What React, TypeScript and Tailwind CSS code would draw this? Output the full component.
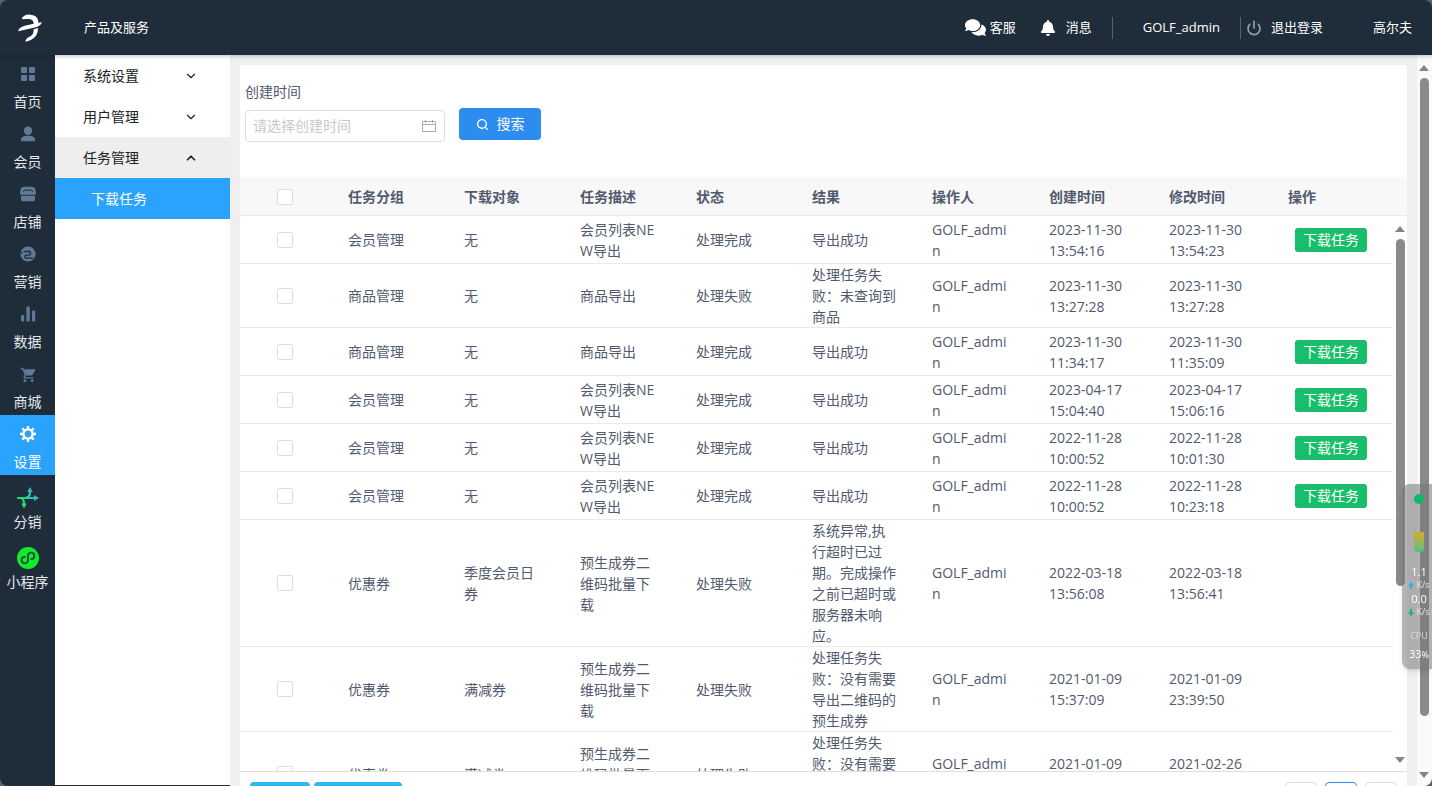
import type { ReactNode } from 'react';
import { FaBell, FaComments } from 'react-icons/fa';
import { IoMdCart } from 'react-icons/io';
import { ChevronDown, ChevronUp, Power, Search } from 'lucide-react';

type Task = {
  group: string;
  target: string;
  desc: string;
  status: string;
  result: string;
  created: [string, string];
  updated: [string, string];
  download?: boolean;
};

const tasks: Task[] = [
  { group: '会员管理', target: '无', desc: '会员列表NEW导出', status: '处理完成', result: '导出成功', created: ['2023-11-30', '13:54:16'], updated: ['2023-11-30', '13:54:23'], download: true },
  { group: '商品管理', target: '无', desc: '商品导出', status: '处理失败', result: '处理任务失败：未查询到商品', created: ['2023-11-30', '13:27:28'], updated: ['2023-11-30', '13:27:28'] },
  { group: '商品管理', target: '无', desc: '商品导出', status: '处理完成', result: '导出成功', created: ['2023-11-30', '11:34:17'], updated: ['2023-11-30', '11:35:09'], download: true },
  { group: '会员管理', target: '无', desc: '会员列表NEW导出', status: '处理完成', result: '导出成功', created: ['2023-04-17', '15:04:40'], updated: ['2023-04-17', '15:06:16'], download: true },
  { group: '会员管理', target: '无', desc: '会员列表NEW导出', status: '处理完成', result: '导出成功', created: ['2022-11-28', '10:00:52'], updated: ['2022-11-28', '10:01:30'], download: true },
  { group: '会员管理', target: '无', desc: '会员列表NEW导出', status: '处理完成', result: '导出成功', created: ['2022-11-28', '10:00:52'], updated: ['2022-11-28', '10:23:18'], download: true },
  { group: '优惠券', target: '季度会员日券', desc: '预生成券二维码批量下载', status: '处理失败', result: '系统异常,执行超时已过期。完成操作之前已超时或服务器未响应。', created: ['2022-03-18', '13:56:08'], updated: ['2022-03-18', '13:56:41'] },
  { group: '优惠券', target: '满减券', desc: '预生成券二维码批量下载', status: '处理失败', result: '处理任务失败：没有需要导出二维码的预生成券', created: ['2021-01-09', '15:37:09'], updated: ['2021-01-09', '23:39:50'] },
  { group: '优惠券', target: '满减券', desc: '预生成券二维码批量下载', status: '处理失败', result: '处理任务失败：没有需要导出二维码的预生成券', created: ['2021-01-09', '15:35:22'], updated: ['2021-02-26', '10:12:37'] },
];

const columns = ['任务分组', '下载对象', '任务描述', '状态', '结果', '操作人', '创建时间', '修改时间', '操作'];

const GridIcon = () => (
  <svg width="16" height="16" viewBox="0 0 16 16" fill="currentColor">
    <rect x="1" y="1" width="6" height="6" rx="1" />
    <rect x="9" y="1" width="6" height="6" rx="1" />
    <rect x="1" y="9" width="6" height="6" rx="1" />
    <rect x="9" y="9" width="6" height="6" rx="1" />
  </svg>
);

const PersonIcon = () => (
  <svg width="16" height="16" viewBox="0 0 16 16" fill="currentColor">
    <circle cx="8" cy="4.700" r="4.200" />
    <path d="M1 15.200v-1.400c0-2.600 2.600-4 7-4s7 1.400 7 4v1.400z" />
  </svg>
);

const ShopIcon = () => (
  <svg width="16" height="16" viewBox="0 0 16 16" fill="currentColor">
    <path d="M4 0.800h8c2 0 3 1 3.400 3l.6 2.400c.3 1.700-.6 2.600-2 2.600H2C.6 8.800-.3 7.900 0 6.200l.6-2.400c.4-2 1.400-3 3.400-3z" />
    <path d="M1 9.800h14V13.500a1.700 1.700 0 0 1-1.700 1.700H2.700A1.700 1.700 0 0 1 1 13.500z" />
    <path d="M3.300 5.800c.2-1.300.8-1.600 1.800-1.600h5.800c1 0 1.600.3 1.800 1.600" fill="none" stroke="#1f2d3a" strokeWidth="1" />
  </svg>
);

const MarketingIcon = () => (
  <svg width="16" height="16" viewBox="0 0 16 16" fill="none">
    <circle cx="8" cy="8" r="7.600" fill="currentColor" />
    <path d="M0 7h2.500M3.500 5.500h6a2 2 0 0 1 0 3.600H6.200a1.500 1.500 0 0 0 0 3h7.200" stroke="#1f2d3a" strokeWidth="1.400" />
  </svg>
);

const ChartIcon = () => (
  <svg width="16" height="16" viewBox="0 0 16 16" fill="currentColor">
    <rect x="1" y="9" width="3.200" height="6.500" rx="1" />
    <rect x="6.400" y="0.500" width="3.400" height="15" rx="1" />
    <rect x="12" y="4.500" width="3.200" height="11" rx="1" />
  </svg>
);

const GearIcon = () => (
  <svg width="16" height="16" viewBox="0 0 16 16" fill="none" stroke="currentColor">
    <circle cx="8" cy="8" r="4.600" strokeWidth="2.400" />
    <path d="M8 0v3M8 13v3M0 8h3M13 8h3M2.300 2.300l2 2M11.700 11.700l2 2M2.300 13.700l2-2M11.700 4.300l2-2" strokeWidth="2.400" />
  </svg>
);

const ShareIcon = () => (
  <svg width="22" height="22" viewBox="0 0 22 22" fill="none">
    <defs>
      <linearGradient id="share" x1="0" y1="22" x2="22" y2="0" gradientUnits="userSpaceOnUse">
        <stop offset="0.250" stopColor="#1fe05c" />
        <stop offset="0.750" stopColor="#35b5cf" />
      </linearGradient>
    </defs>
    <path d="M1 11h17M8 11c3.500 0 5-1.500 5-6M3 11c3 0 4 1.500 4 6" stroke="url(#share)" strokeWidth="2.200" strokeLinecap="round" />
    <path d="M17 8l5 3-5 3zM10.300 5L13 0l2.700 5zM4.300 16.500h5.400L7 21.500z" fill="url(#share)" />
  </svg>
);

const MiniAppIcon = () => (
  <svg width="22" height="22" viewBox="0 0 22 22" fill="none">
    <circle cx="11" cy="11" r="11" fill="#12ea2c" />
    <path d="M7.800 9.900A3.200 3.200 0 1 0 11 13.500V8.500A3.200 3.200 0 1 1 14.200 12.100" stroke="#1f4a3a" strokeWidth="1.800" strokeLinecap="round" />
  </svg>
);

const Logo = () => (
  <svg width="40" height="40" viewBox="0 0 120 120" fill="#fff">
    <path d="M35 33c4-9 12-14 26-13 15 1 24 9 24 24l11-1c-4 9-10 13-18 15L24 70c2-9 9-14 20-17l27-6c0-9-7-14-16-14-8 0-14 1-20 0z" />
    <path d="M71 64l13-4c1 21-13 37-38 41 2-9 6-13 13-15 9-3 12-11 12-22z" />
  </svg>
);

type NavItem = { label: string; icon: ReactNode; active?: boolean; large?: boolean };

const navItems: NavItem[] = [
  { label: '首页', icon: <GridIcon /> },
  { label: '会员', icon: <PersonIcon /> },
  { label: '店铺', icon: <ShopIcon /> },
  { label: '营销', icon: <MarketingIcon /> },
  { label: '数据', icon: <ChartIcon /> },
  { label: '商城', icon: <IoMdCart size={18} /> },
  { label: '设置', icon: <GearIcon />, active: true },
  { label: '分销', icon: <ShareIcon />, large: true },
  { label: '小程序', icon: <MiniAppIcon />, large: true },
];

function Header() {
  return (
    <header className="relative z-10 flex h-[55px] shrink-0 items-center bg-[#1f2d3a] pr-5 text-[13px] text-white shadow-[0_1px_4px_rgba(0,0,0,0.25)]">
      <a href="#" aria-label="首页" className="flex w-[55px] justify-center pl-1">
        <Logo />
      </a>
      <a href="#" className="ml-[29px]">产品及服务</a>
      <div className="ml-auto flex items-center">
        <a href="#" className="flex items-center gap-1">
          <FaComments size={21} />
          客服
        </a>
        <a href="#" className="ml-6 flex items-center gap-[10px]">
          <FaBell size={16} />
          消息
        </a>
        <span className="ml-5 h-[22px] w-px bg-[#56626e]" />
        <span className="ml-[30px]">GOLF_admin</span>
        <span className="ml-5 h-[22px] w-px bg-[#56626e]" />
        <button type="button" className="ml-[5px] flex items-center gap-[9px]">
          <Power size={16} strokeWidth={2.5} className="text-[#97a0aa]" />
          退出登录
        </button>
        <span className="ml-[50px]">高尔夫</span>
      </div>
    </header>
  );
}

function Sidebar() {
  return (
    <nav className="w-[55px] shrink-0 bg-[#1f2d3a]">
      {navItems.map((item) => (
        <a
          key={item.label}
          href="#"
          className={`flex h-[60px] flex-col items-center pt-2 text-sm ${item.active ? 'bg-[#2aa3ff] text-white' : 'text-[#e4e8ec]'}`}
        >
          <span className={`flex h-7 ${item.large ? 'items-end pb-[2px]' : 'items-start pt-[3px]'} ${item.active ? 'text-white' : 'text-[#5f7a96]'}`}>
            {item.icon}
          </span>
          <span className="leading-[22px] whitespace-nowrap">{item.label}</span>
        </a>
      ))}
    </nav>
  );
}

function SubMenu() {
  return (
    <nav className="w-[175px] shrink-0 border-b border-[#1f2d3a] bg-white text-sm text-[#222]">
      {['系统设置', '用户管理'].map((label) => (
        <button key={label} type="button" className="flex h-[41px] w-full items-center justify-between pr-8 pl-7">
          {label}
          <ChevronDown size={14} />
        </button>
      ))}
      <button type="button" className="flex h-[41px] w-full items-center justify-between bg-[#eee] pr-8 pl-7">
        任务管理
        <ChevronUp size={14} strokeWidth={3} />
      </button>
      <a href="#" className="flex h-[41px] items-center bg-[#2aa3ff] pl-9 text-white">下载任务</a>
    </nav>
  );
}

function ScrollBar({ thumb }: { thumb: string }) {
  return (
    <div aria-hidden="true" className="flex h-full w-[14px] flex-col items-center pt-[10px] pb-2">
      <svg width="10" height="6" viewBox="0 0 10 6" className="shrink-0"><path d="M5 0l5 6H0z" fill="#858585" /></svg>
      <div className="flex w-full flex-1 justify-center pt-[7px] pb-2">
        <div className={`w-[9px] rounded-full bg-[#8a8a8a] ${thumb}`} />
      </div>
      <svg width="10" height="6" viewBox="0 0 10 6" className="shrink-0"><path d="M5 6l5-6H0z" fill="#858585" /></svg>
    </div>
  );
}

function SearchForm() {
  return (
    <form className="flex h-28 items-start gap-[14px] pl-[5px]" onSubmit={(e) => e.preventDefault()}>
      <div className="pt-4">
        <label htmlFor="created" className="block leading-[21px]">创建时间</label>
        <div className="mt-2 flex h-8 w-[200px] items-center rounded border border-[#dcdee2] pr-2 pl-[7px]">
          <input
            id="created"
            type="text"
            placeholder="请选择创建时间"
            className="w-full min-w-0 flex-1 outline-none placeholder:text-[#c5c8ce]"
          />
          <svg width="14" height="14" viewBox="0 0 14 14" fill="none" stroke="#a8abb2" className="shrink-0">
            <path d="M0.500 2.500h13v10h-13zM0.500 5.500h13M3.500 1v3M10.500 1v3" />
          </svg>
        </div>
      </div>
      <button type="submit" className="mt-[43px] flex h-8 w-[82px] items-center justify-center gap-2 rounded bg-[#2d8cf0] text-white">
        <Search size={13} strokeWidth={2.5} />
        搜索
      </button>
    </form>
  );
}

function Columns() {
  return (
    <colgroup>
      <col className="w-[90px]" />
      <col className="w-[116px]" />
      <col className="w-[116px]" />
      <col className="w-[116px]" />
      <col className="w-[116px]" />
      <col className="w-[120px]" />
      <col className="w-[117px]" />
      <col className="w-[120px]" />
      <col className="w-[119px]" />
      <col className="w-[123px]" />
    </colgroup>
  );
}

function Check({ label }: { label: string }) {
  return (
    <input
      type="checkbox"
      aria-label={label}
      className="mx-auto block size-4 appearance-none rounded-xs border border-[#dcdee2] bg-white checked:bg-[#2d8cf0]"
    />
  );
}

function Cell({ children }: { children?: ReactNode }) {
  return <td className="border-b border-[#e8eaec] px-[18px]">{children}</td>;
}

function TaskTable() {
  return (
    <div>
      <div className="h-[39px] border-b border-[#e8eaec] bg-[#f8f8f9] pr-[14px]">
        <table className="w-full table-fixed">
          <Columns />
          <thead>
            <tr className="h-10">
              <th><Check label="全选" /></th>
              {columns.map((name) => (
                <th key={name} className="px-[18px] text-left font-bold">{name}</th>
              ))}
            </tr>
          </thead>
        </table>
      </div>
      <div className="flex h-[calc(100vh-231px)] overflow-hidden">
        <div className="min-w-0 flex-1">
          <table className="w-full table-fixed border-separate border-spacing-0 leading-[21px]">
            <Columns />
            <tbody>
              {tasks.map((task, i) => (
                <tr key={i} className="h-12 break-all">
                  <td className="border-b border-[#e8eaec]"><Check label={task.group} /></td>
                  <Cell>{task.group}</Cell>
                  <Cell>{task.target}</Cell>
                  <Cell>{task.desc}</Cell>
                  <Cell>{task.status}</Cell>
                  <Cell>{task.result}</Cell>
                  <Cell>GOLF_admin</Cell>
                  <Cell>{task.created.join(' ')}</Cell>
                  <Cell>{task.updated.join(' ')}</Cell>
                  <Cell>
                    {task.download && (
                      <button type="button" className="ml-[7px] block h-6 w-[72px] rounded-[3px] bg-[#19be6b] whitespace-nowrap text-white">
                        下载任务
                      </button>
                    )}
                  </Cell>
                </tr>
              ))}
            </tbody>
          </table>
        </div>
        <ScrollBar thumb="h-[68%]" />
      </div>
      <div className="flex justify-between border-t border-[#dcdee2] px-[10px] pt-[10px]">
        <div className="flex gap-1">
          <button type="button" aria-label="导出" className="h-8 w-[60px] rounded bg-[#2db7f5]" />
          <button type="button" aria-label="批量删除" className="h-8 w-[88px] rounded bg-[#2db7f5]" />
        </div>
        <div className="flex gap-2">
          <button type="button" aria-label="上一页" className="size-8 rounded border border-[#dcdee2]" />
          <button type="button" aria-label="第一页" className="size-8 rounded border border-[#2d8cf0]" />
          <button type="button" aria-label="下一页" className="size-8 rounded border border-[#dcdee2]" />
        </div>
      </div>
    </div>
  );
}

function Speed({ value, up }: { value: string; up?: boolean }) {
  return (
    <div className="flex flex-col items-center">
      <span className="leading-[15px]">{value}</span>
      <span className="flex items-center gap-[2px] text-[9px] leading-3 text-[#e4e4e4]">
        <svg width="6" height="7" viewBox="0 0 6 7" className={up ? 'text-[#28b4e8]' : 'rotate-180 text-[#12b866]'}>
          <path d="M3 0l3 3.500H4V7H2V3.500H0z" fill="currentColor" />
        </svg>
        K/s
      </span>
    </div>
  );
}

function Monitor() {
  return (
    <aside className="fixed top-[484px] right-0 z-20 flex h-[185px] w-[30px] flex-col items-center rounded-l-lg bg-[#777]/55 pt-[10px] pl-1 text-[11px] text-white shadow-md">
      <span className="size-[10px] shrink-0 rounded-full bg-[#0fb868]" />
      <span className="mt-7 mb-3 h-5 w-[10px] shrink-0 rounded-b bg-gradient-to-b from-[#d5a915] to-[#43c07c]" />
      <Speed value="1.1" up />
      <Speed value="0.0" />
      <span className="mt-3 text-[9px] leading-3 text-[#d8d8d8]">CPU</span>
      <span className="mt-1 leading-[15px] whitespace-nowrap">33<small className="text-[9px]">%</small></span>
    </aside>
  );
}

export default function App() {
  return (
    <div className="h-screen bg-[#59636d] font-['Open_Sans','Noto_Sans_CJK_SC',sans-serif] text-sm text-[#515a6e]">
      <div className="flex h-full flex-col overflow-hidden rounded-lg">
        <Header />
        <div className="flex min-h-0 flex-1">
          <Sidebar />
          <SubMenu />
          <main className="min-w-0 flex-1 overflow-hidden bg-[#efefef] p-[10px]">
            <div className="bg-white">
              <SearchForm />
              <TaskTable />
            </div>
          </main>
          <div className="w-[15px] shrink-0 bg-[#fafafa]">
            <ScrollBar thumb="h-[93%]" />
          </div>
        </div>
        <Monitor />
      </div>
    </div>
  );
}
